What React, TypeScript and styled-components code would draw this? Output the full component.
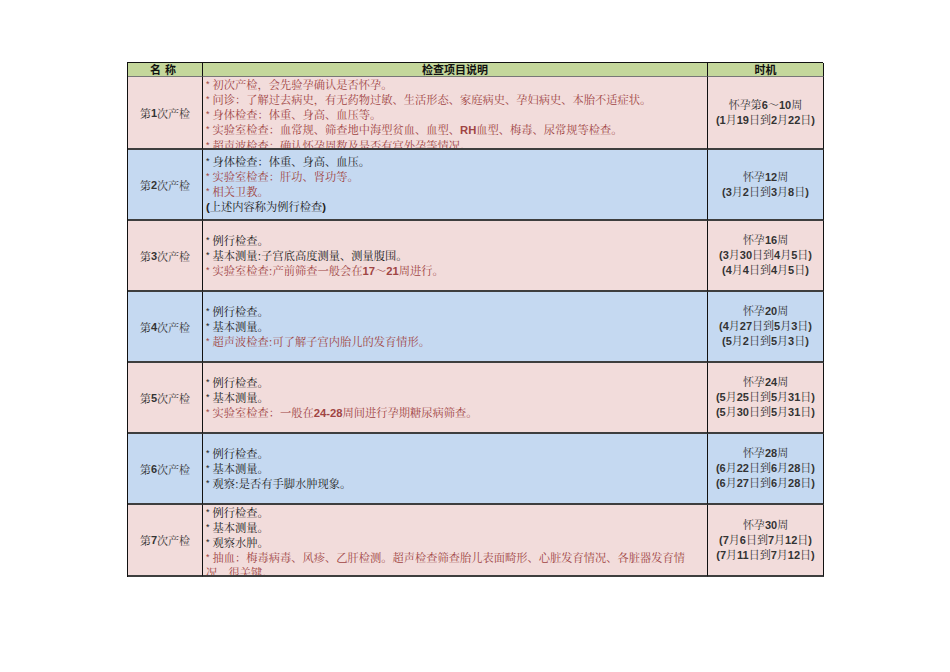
import React from "react";
import styled, { createGlobalStyle } from "styled-components";

const GlobalStyle = createGlobalStyle`
  html, body {
    margin: 0;
    padding: 0;
    background: #ffffff;
  }
  body {
    font-family: "Liberation Sans", "Noto Serif CJK SC", "Noto Sans CJK SC", sans-serif;
    color: #222;
  }
`;

const Page = styled.div`
  width: 950px;
  height: 672px;
  box-sizing: border-box;
  padding: 62px 0 0 127px;
`;

const Table = styled.div`
  display: grid;
  grid-template-columns: 75px 505px 116px;
  width: 696px;
  box-sizing: border-box;
  border-top: 1px solid #111;
  border-left: 1px solid #111;
`;

const HeadCell = styled.div<{ $spaced?: boolean }>`
  height: 14px;
  box-sizing: border-box;
  background: #c4d79b;
  border-right: 1.5px solid #111;
  border-bottom: 1px solid #777;
  display: flex;
  align-items: center;
  justify-content: center;
  font-family: "Noto Sans CJK SC", sans-serif;
  font-weight: 700;
  font-size: 11px;
  line-height: 13px;
  color: #111;
  letter-spacing: ${(p) => (p.$spaced ? "4px" : "0")};
`;

type Tone = "pink" | "blue";

const Cell = styled.div<{ $tone: Tone; $h: number }>`
  height: ${(p) => p.$h}px;
  box-sizing: border-box;
  background: ${(p) => (p.$tone === "pink" ? "#f2dcdb" : "#c5d9f1")};
  border-right: 1.5px solid #111;
  border-bottom: 2px solid #3e3e3e;
  overflow: hidden;
`;

const NameCell = styled(Cell)`
  display: flex;
  align-items: center;
  justify-content: center;
  font-size: 11px;
  color: #333;
`;

const DescCell = styled(Cell)`
  display: flex;
  flex-direction: column;
  justify-content: safe center;
  padding: 0 14px 0 3px;
  font-size: 11.25px;
  line-height: 15px;
`;

const TimeCell = styled(Cell)`
  display: flex;
  flex-direction: column;
  align-items: center;
  justify-content: center;
  font-size: 11px;
  line-height: 15px;
  color: #333;
`;

const Line = styled.div<{ $red?: boolean }>`
  color: ${(p) => (p.$red ? "#a04443" : "#222")};
  font-family: "Noto Serif CJK SC", "Noto Sans CJK SC", "Liberation Serif", serif;
  word-break: break-all;
`;

const Star = styled.span`
  font-family: "Liberation Sans", sans-serif;
  font-size: 9px;
  margin-right: 3px;
  vertical-align: 2px;
`;

const Latin = styled.span`
  font-family: "Liberation Sans", sans-serif;
  font-weight: 700;
`;

const withLatin = (text: string) =>
  text.split(/([0-9A-Za-z()\-]+)/).map((part, i) =>
    /^[0-9A-Za-z()\-]+$/.test(part) ? <Latin key={i}>{part}</Latin> : part
  );

type Item = { t: string; red?: boolean; plain?: boolean };
type Row = { name: string; items: Item[]; time: string[]; h: number };

const rows: Row[] = [
  {
    name: "第1次产检",
    h: 73,
    items: [
      { t: "初次产检，会先验孕确认是否怀孕。", red: true },
      { t: "问诊：了解过去病史，有无药物过敏、生活形态、家庭病史、孕妇病史、本胎不适症状。", red: true },
      { t: "身体检查：体重、身高、血压等。", red: true },
      { t: "实验室检查：血常规、筛查地中海型贫血、血型、RH血型、梅毒、尿常规等检查。", red: true },
      { t: "超声波检查：确认怀孕周数及是否有宫外孕等情况。", red: true },
    ],
    time: ["怀孕第6～10周", "(1月19日到2月22日)"],
  },
  {
    name: "第2次产检",
    h: 71,
    items: [
      { t: "身体检查：体重、身高、血压。" },
      { t: "实验室检查：肝功、肾功等。", red: true },
      { t: "相关卫教。", red: true },
      { t: "(上述内容称为例行检查)", plain: true },
    ],
    time: ["怀孕12周", "(3月2日到3月8日)"],
  },
  {
    name: "第3次产检",
    h: 71,
    items: [
      { t: "例行检查。" },
      { t: "基本测量:子宫底高度测量、测量腹围。" },
      { t: "实验室检查:产前筛查一般会在17～21周进行。", red: true },
    ],
    time: ["怀孕16周", "(3月30日到4月5日)", "(4月4日到4月5日)"],
  },
  {
    name: "第4次产检",
    h: 71,
    items: [
      { t: "例行检查。" },
      { t: "基本测量。" },
      { t: "超声波检查:可了解子宫内胎儿的发育情形。", red: true },
    ],
    time: ["怀孕20周", "(4月27日到5月3日)", "(5月2日到5月3日)"],
  },
  {
    name: "第5次产检",
    h: 71,
    items: [
      { t: "例行检查。" },
      { t: "基本测量。" },
      { t: "实验室检查：一般在24-28周间进行孕期糖尿病筛查。", red: true },
    ],
    time: ["怀孕24周", "(5月25日到5月31日)", "(5月30日到5月31日)"],
  },
  {
    name: "第6次产检",
    h: 71,
    items: [
      { t: "例行检查。" },
      { t: "基本测量。" },
      { t: "观察:是否有手脚水肿现象。" },
    ],
    time: ["怀孕28周", "(6月22日到6月28日)", "(6月27日到6月28日)"],
  },
  {
    name: "第7次产检",
    h: 72,
    items: [
      { t: "例行检查。" },
      { t: "基本测量。" },
      { t: "观察水肿。" },
      {
        t: "抽血：梅毒病毒、风疹、乙肝检测。超声检查筛查胎儿表面畸形、心脏发育情况、各脏器发育情况，很关键。",
        red: true,
      },
    ],
    time: ["怀孕30周", "(7月6日到7月12日)", "(7月11日到7月12日)"],
  },
];

export default function App() {
  return (
    <Page>
      <GlobalStyle />
      <Table>
        <HeadCell $spaced>名称</HeadCell>
        <HeadCell>检查项目说明</HeadCell>
        <HeadCell>时机</HeadCell>
        {rows.map((row, idx) => {
          const tone: Tone = idx % 2 === 0 ? "pink" : "blue";
          return (
            <React.Fragment key={row.name}>
              <NameCell $tone={tone} $h={row.h}>
                {withLatin(row.name)}
              </NameCell>
              <DescCell $tone={tone} $h={row.h}>
                {row.items.map((it, i) => (
                  <Line key={i} $red={it.red}>
                    {!it.plain && <Star>*</Star>}
                    {withLatin(it.t)}
                  </Line>
                ))}
              </DescCell>
              <TimeCell $tone={tone} $h={row.h}>
                {row.time.map((t, i) => (
                  <div key={i}>{withLatin(t)}</div>
                ))}
              </TimeCell>
            </React.Fragment>
          );
        })}
      </Table>
    </Page>
  );
}
